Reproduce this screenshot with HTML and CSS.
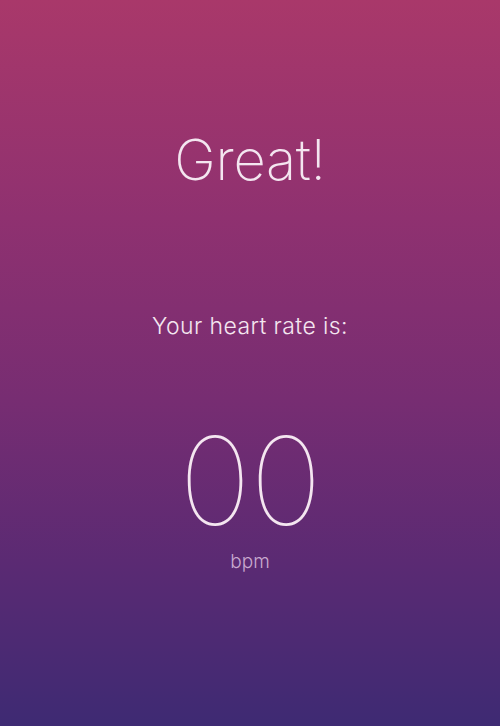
FILE: index.html
```html
<!DOCTYPE html>
<html>
<head>
<meta charset="utf-8">
<link rel="stylesheet" href="styles.css">
</head>
<body>
<main class="screen">
  <h1 class="title">Great!</h1>
  <p class="label">Your heart rate is:</p>
  <div class="value">00</div>
  <div class="unit">bpm</div>
</main>
</body>
</html>
```
FILE: styles.css
```css
html, body {
  margin: 0;
  padding: 0;
}
body {
  width: 500px;
  height: 726px;
  overflow: hidden;
}
.screen {
  box-sizing: border-box;
  width: 500px;
  height: 726px;
  display: flex;
  flex-direction: column;
  align-items: center;
  background: linear-gradient(180deg, #a9386a 0%, #8f3170 30%, #772d72 55%, #5a2a73 78%, #3e2a73 100%);
  color: #f4e6f0;
  font-family: Inter, "Noto Sans", sans-serif;
  padding-top: 120px;
}
.title {
  margin: 0;
  font-size: 56px;
  font-weight: 200;
  line-height: 80px;
  letter-spacing: -0.3px;
}
.label {
  margin: 111px 0 0 0;
  font-size: 23px;
  font-weight: 300;
  line-height: 30px;
  letter-spacing: 0.4px;
}
.value {
  margin-top: 80px;
  font-size: 122px;
  font-weight: 100;
  line-height: 120px;
  letter-spacing: -1px;
}
.unit {
  margin-top: 9px;
  font-size: 19px;
  font-weight: 300;
  line-height: 24px;
  color: #c9a9cf;
}
```
